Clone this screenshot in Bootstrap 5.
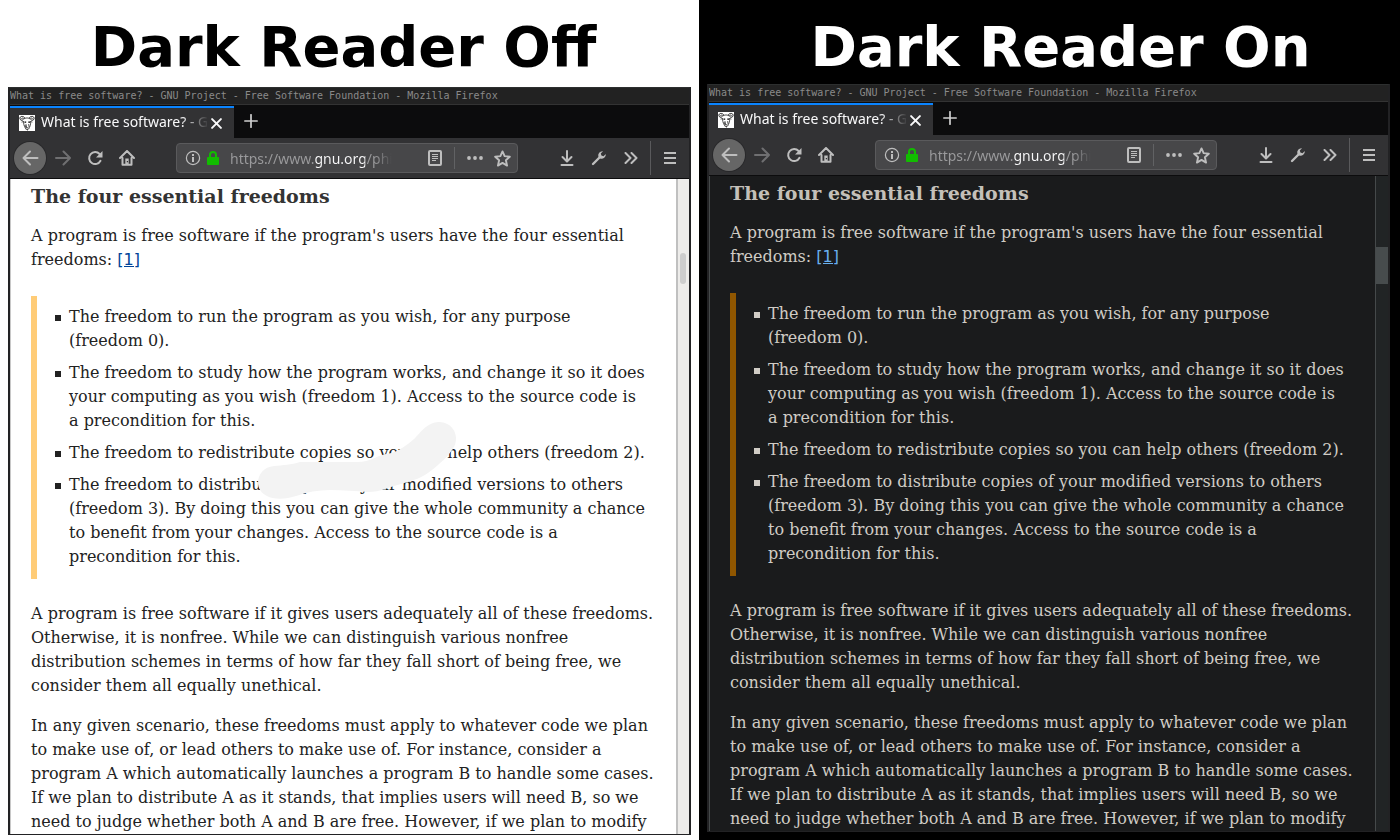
<!DOCTYPE html>
<html lang="en">
<head>
<meta charset="utf-8">
<meta name="viewport" content="width=device-width, initial-scale=1">
<title>Dark Reader comparison</title>
<link rel="stylesheet" href="https://cdn.jsdelivr.net/npm/bootstrap@5.3.0/dist/css/bootstrap.min.css">
<style>
.compare { display: grid; grid-template-columns: 699fr 701fr; }
.side { font-family: "DejaVu Sans", sans-serif; padding: 0 8px 5px; background: #fff; color: #000; }
.side-on { padding: 0 10px 8px 8px; background: #000; color: #fff; }
.caption { font-size: 56px; line-height: 64px; font-weight: 700; margin: 0; padding: 15px 12px 8px 0; white-space: nowrap; }
.side-on .caption { padding: 15px 0 5px 24px; }

.browser { border: 2px solid #222224; border-top: 1px solid #2d2f2f; border-bottom-width: 1px; background: #0c0c0d; min-width: 0; }
.win-title { font: 10px/16px "DejaVu Sans Mono", monospace; color: #8a8a8a; background: #222; border-bottom: 1px solid #333; height: 17px; white-space: nowrap; overflow: hidden; }
.tabs { height: 33px; padding-top: 1px; color: #d0d0d0; }
.tabs button, .tools button { background: none; border: 0; padding: 0; color: inherit; display: flex; align-items: center; justify-content: center; }
.tab { width: 224px; background: #323234; border-top: 2px solid #0a84ff; padding: 0 12px 0 9px; color: #f9f9fa; }
.tabs .tab-name { font: 14px/20px "Noto Sans", sans-serif; width: 166px; margin-left: 6px; padding-bottom: 2px; white-space: nowrap; overflow: hidden; justify-content: start; -webkit-mask-image: linear-gradient(90deg, #000 140px, transparent 168px); mask-image: linear-gradient(90deg, #000 140px, transparent 168px); }
.tabs .new-tab { width: 34px; padding-bottom: 2px; }
.tools { height: 41px; background: #323234; border-bottom: 1px solid #0c0c0d; color: #bebebe; padding: 0 4px; }
.tools .back { width: 32px; height: 32px; margin-right: 1px; border-radius: 50%; background: #666; box-shadow: 0 0 0 1px #29292b; }
.tools .tool { width: 32px; height: 32px; }
.tools .dim { color: #6f6f71; }
.address { width: 342px; height: 30px; margin-left: 33px; background: #474749; border: 1px solid #5a5a5c; border-radius: 4px; padding: 0 6px 0 8px; }
.address input { width: 168px; height: 26px; min-width: 0; border: 0; padding: 0; margin-left: 9px; outline: 0; font: 14px/24px "Noto Sans", sans-serif; color: transparent; background: linear-gradient(90deg, #9b9b9d 85px, #f9f9fa 85px 135px, #9b9b9d 135px 145px, transparent 162px); -webkit-background-clip: text; background-clip: text; }
.address .vr, .tools .vr { opacity: 1; background: #616264; }
.address .vr { height: 22px; align-self: center; margin: 0 12px; }
.address .bookmark { margin-left: 11px; }
.tools .menu-line { height: 34px; align-self: center; margin: 0 9px 0 3px; background: #5a5a5c; }
.tools .menu { padding: 4px 9px 4px 4px; }
.spacer { flex: 1 1 0; }

.web { background: #fff; color: #222; border-left: 1px solid #c8c8c8; font: 16px/24px "DejaVu Serif", serif; }
.article { padding: 4px 20px 0; flex: 1 1 0; min-width: 0; }
.article h2 { font: bold 19px/26px "DejaVu Serif", serif; color: #333; margin: 0 0 15px; }
.article p { margin: 0 0 16px; }
.article a { color: #049; font-family: "DejaVu Sans", sans-serif; }
.freedoms { list-style: none; border-left: 6px solid #fc7; margin: 24px 0 23px; padding: 9px 4px 10px 18px; }
.freedoms li { padding-left: 14px; margin-bottom: 8px; background: linear-gradient(currentColor, currentColor) 0 10px / 6px 6px no-repeat; }
.freedoms li:last-child { margin-bottom: 0; }
.smudge { position: absolute; left: 227px; top: 124px; }
.scroll { width: 13px; background: #edecea; border-left: 2px solid #c0c0c0; padding: 74px 3px 0 2px; }
.thumb { height: 31px; border-radius: 3px; background: #cdcdcd; }

.side-on .web { background: #1a1b1c; color: #d0ccc5; border-left-color: #45494a; }
.side-on h2 { color: #c4c0b9; }
.side-on .article a { color: #69b0ef; }
.side-on .freedoms { border-left-color: #8f5600; }
.side-on .scroll { background: #212425; border-left: 1px solid #45494a; padding: 71px 0 0; }
.side-on .thumb { height: 37px; border-radius: 0; background: #474c4d; }
</style>
</head>
<body>
<svg class="d-none" aria-hidden="true">
  <symbol id="gnu" viewBox="0 0 16 16"><path fill="#fff" d="M0 0h16v16H0z"/><g fill="none" stroke="#222" stroke-linecap="round"><path d="M5.500 2.500C4 .8 1 1 .9 3.300 1 5.200 2.700 5.800 3.800 5M10.500 2.500c1.500-1.700 4.500-1.500 4.600.8-.1 1.900-1.800 2.500-2.900 1.700"/><path stroke-width=".8" d="M2.500 3.500C3 2.500 4 3 4.600 3.800M13.500 3.500c-.5-1-1.500-.5-2.100.3M4.500 4c2-1.500 5-1.500 7 0M3 7l1.500-.5M13 7l-1.500-.5M4.500 7c.3 4 1.200 5 2.800 7.500M11.700 7c0 3-.7 4.500-2 7M7 9.500l.5 2.500M9.700 9.500l.3 2M6.200 10.500l.8 2"/></g><path d="M5.500 6.500h1.700v1.200H5.500zM9.300 6.500H11v1.200H9.300zM7.300 12.400h2.200v.9H7.300zM7.500 14.300h1.700l-.8 1.400z"/></symbol>
  <symbol id="close" viewBox="0 0 10 10"><path d="M1 1l8 8M9 1L1 9" fill="none" stroke="currentColor" stroke-width="1.800" stroke-linecap="round"/></symbol>
  <symbol id="plus" viewBox="0 0 14 14"><path d="M7 .8v12.400M.8 7h12.400" fill="none" stroke="currentColor" stroke-width="1.700" stroke-linecap="round"/></symbol>
  <symbol id="arrow" viewBox="0 0 16 16"><path d="M15 8H1M7.500 1.500L1 8l6.500 6.500" fill="none" stroke="currentColor" stroke-width="2" stroke-linecap="round" stroke-linejoin="round"/></symbol>
  <symbol id="forward" viewBox="0 0 16 16"><path d="M1 8h14M8.500 1.500L15 8l-6.500 6.500" fill="none" stroke="currentColor" stroke-width="2" stroke-linecap="round" stroke-linejoin="round"/></symbol>
  <symbol id="reload" viewBox="0 0 16 16"><path d="M13.500 10.800A6 6 0 1 1 12.600 4" fill="none" stroke="currentColor" stroke-width="2" stroke-linecap="round"/><path fill="currentColor" d="M15.500 1v6.500H9z"/></symbol>
  <symbol id="home" viewBox="0 0 16 16"><g fill="none" stroke="currentColor" stroke-width="2" stroke-linecap="round" stroke-linejoin="round"><path d="M1 8l7-7 7 7M3.500 8v6.800h9V8"/></g><path fill="currentColor" d="M6.300 8.500h3.400V15H6.300z"/><path fill="#323234" d="M7.800 11H9v1.300H7.800z"/></symbol>
  <symbol id="info" viewBox="0 0 16 16"><circle cx="8" cy="8" r="6.600" fill="none" stroke="currentColor" stroke-width="1.200"/><path fill="currentColor" d="M7 7h2v5H7zM7 4h2v2H7z"/></symbol>
  <symbol id="lock" viewBox="0 0 12 14"><path d="M3 7V4a3 3 0 0 1 6 0v3" fill="none" stroke="#12bc00" stroke-width="2"/><rect y="6" width="12" height="8" rx="1" fill="#12bc00"/></symbol>
  <symbol id="reader" viewBox="0 0 14 16"><rect x="1" y="1" width="12" height="14" rx="1" fill="none" stroke="currentColor" stroke-width="2"/><path d="M4 4.500h6M4 6.500h6M4 8.500h6M4 10.500h4" stroke="currentColor"/></symbol>
  <symbol id="dots" viewBox="0 0 16 16"><g fill="currentColor"><circle cx="2" cy="8" r="1.900"/><circle cx="8" cy="8" r="1.900"/><circle cx="14" cy="8" r="1.900"/></g></symbol>
  <symbol id="star" viewBox="0 0 16 16"><path d="M8 1.300l2 4.500 4.900.5-3.700 3.300 1.100 5.100L8 12.100l-4.300 2.600 1.100-5.100L1.100 6.300 6 5.800z" fill="none" stroke="currentColor" stroke-width="1.800" stroke-linejoin="round"/></symbol>
  <symbol id="download" viewBox="0 0 14 16"><path d="M7 1v10M2.500 7L7 11.500 11.500 7M1.500 15h11" fill="none" stroke="currentColor" stroke-width="2" stroke-linecap="round" stroke-linejoin="round"/></symbol>
  <symbol id="wrench" viewBox="0 0 16 16"><path d="M2 14l6.500-6.500" stroke="currentColor" stroke-width="2.400" stroke-linecap="round"/><path d="M12 1.200a4.300 4.300 0 0 0-4.600 5.600L9.200 8.600a4.300 4.300 0 0 0 5.600-4.600l-2.300 2.200-2.100-.6-.6-2.100z" fill="currentColor"/></symbol>
  <symbol id="more" viewBox="0 0 14 12"><path d="M1.500 1l5 5-5 5M7.500 1l5 5-5 5" fill="none" stroke="currentColor" stroke-width="2" stroke-linecap="round" stroke-linejoin="round"/></symbol>
  <symbol id="menu" viewBox="0 0 12 12"><path d="M0 1h12M0 6h12M0 11h12" stroke="currentColor" stroke-width="2"/></symbol>
</svg>

<main class="compare min-vh-100">
  <section class="side d-flex flex-column">
    <h1 class="caption text-center">Dark Reader Off</h1>
    <div class="browser d-flex flex-column flex-grow-1">
      <div class="win-title">What is free software? - GNU Project - Free Software Foundation - Mozilla Firefox</div>
      <div class="tabs d-flex">
        <div class="tab d-flex align-items-center">
          <svg width="16" height="16"><use href="#gnu"/></svg>
          <button class="tab-name" type="button">What is free software? - G</button>
          <button class="ms-auto" type="button" aria-label="Close tab"><svg width="11" height="11"><use href="#close"/></svg></button>
        </div>
        <button class="new-tab" type="button" aria-label="New tab"><svg width="14" height="14"><use href="#plus"/></svg></button>
      </div>
      <div class="tools d-flex align-items-center">
        <button class="back" type="button" aria-label="Back"><svg width="17" height="16"><use href="#arrow"/></svg></button>
        <button class="tool dim" type="button" aria-label="Forward"><svg width="16" height="16"><use href="#forward"/></svg></button>
        <button class="tool" type="button" aria-label="Reload"><svg width="16" height="16"><use href="#reload"/></svg></button>
        <button class="tool" type="button" aria-label="Home"><svg width="16" height="16"><use href="#home"/></svg></button>
        <div class="address d-flex align-items-center">
          <button type="button" aria-label="Site information"><svg width="16" height="16"><use href="#info"/></svg></button>
          <svg class="ms-1" width="16" height="14"><use href="#lock"/></svg>
          <input type="text" aria-label="Address" value="https://www.gnu.org/philo">
          <div class="spacer"></div>
          <button type="button" aria-label="Reader view"><svg width="14" height="16"><use href="#reader"/></svg></button>
          <div class="vr"></div>
          <button type="button" aria-label="Page actions"><svg width="16" height="16"><use href="#dots"/></svg></button>
          <button class="bookmark" type="button" aria-label="Bookmark"><svg width="17" height="17"><use href="#star"/></svg></button>
        </div>
        <div class="spacer"></div>
        <button class="tool" type="button" aria-label="Downloads"><svg width="14" height="16"><use href="#download"/></svg></button>
        <button class="tool" type="button" aria-label="Developer tools"><svg width="16" height="16"><use href="#wrench"/></svg></button>
        <button class="tool" type="button" aria-label="More tools"><svg width="14" height="12"><use href="#more"/></svg></button>
        <div class="vr menu-line"></div>
        <button class="menu" type="button" aria-label="Menu"><svg width="12" height="12"><use href="#menu"/></svg></button>
      </div>
      <div class="web d-flex flex-grow-1">
        <article class="article">
          <h2>The four essential freedoms</h2>
          <p>A program is free software if the program's users have the four essential freedoms: <a href="#f1">[1]</a></p>
          <div class="position-relative">
            <ul class="freedoms">
              <li>The freedom to run the program as you wish, for any purpose (freedom&nbsp;0).</li>
              <li>The freedom to study how the program works, and change it so it does your computing as you wish (freedom 1). Access to the source code is a&nbsp;precondition for this.</li>
              <li>The freedom to redistribute copies so you can help others (freedom&nbsp;2).</li>
              <li>The freedom to distribute copies of your modified versions to others (freedom 3). By doing this you can give the whole community a chance to benefit from your changes. Access to the source code is a precondition for this.</li>
            </ul>
            <svg class="smudge" width="206" height="84" viewBox="258 420 206 84" aria-hidden="true"><path fill="#f3f3f3" d="M258 483c0-9 6-16 16-17 9-1 17-1 26-4h58c12 0 18-6 28-8 9-1 15-5 22-10 10-7 13-15 21-19 6-4 14-4 20 0 7 5 9 14 5 22-5 9-15 17-22 23-10 8-20 11-31 14-12 3-20 8-33 8-12-1-25-2-38-2-12 0-23 2-34 6-9 3-22 4-29 0-6-3-9-8-9-13z"/></svg>
          </div>
          <p>A program is free software if it gives users adequately all of these freedoms. Otherwise, it is nonfree. While we can distinguish various nonfree distribution schemes in terms of how far they fall short of being free, we consider them all equally unethical.</p>
          <p class="mb-0">In any given scenario, these freedoms must apply to whatever code we plan to make use of, or lead others to make use of. For instance, consider a program A which automatically launches a program B to handle some cases. If we plan to distribute A as it stands, that implies users will need B, so we need to judge whether both A and B are free. However, if we plan to modify</p>
        </article>
        <div class="scroll"><div class="thumb"></div></div>
      </div>
    </div>
  </section>

  <section class="side side-on d-flex flex-column">
    <h1 class="caption text-center">Dark Reader On</h1>
    <div class="browser d-flex flex-column flex-grow-1">
      <div class="win-title">What is free software? - GNU Project - Free Software Foundation - Mozilla Firefox</div>
      <div class="tabs d-flex">
        <div class="tab d-flex align-items-center">
          <svg width="16" height="16"><use href="#gnu"/></svg>
          <button class="tab-name" type="button">What is free software? - G</button>
          <button class="ms-auto" type="button" aria-label="Close tab"><svg width="11" height="11"><use href="#close"/></svg></button>
        </div>
        <button class="new-tab" type="button" aria-label="New tab"><svg width="14" height="14"><use href="#plus"/></svg></button>
      </div>
      <div class="tools d-flex align-items-center">
        <button class="back" type="button" aria-label="Back"><svg width="17" height="16"><use href="#arrow"/></svg></button>
        <button class="tool dim" type="button" aria-label="Forward"><svg width="16" height="16"><use href="#forward"/></svg></button>
        <button class="tool" type="button" aria-label="Reload"><svg width="16" height="16"><use href="#reload"/></svg></button>
        <button class="tool" type="button" aria-label="Home"><svg width="16" height="16"><use href="#home"/></svg></button>
        <div class="address d-flex align-items-center">
          <button type="button" aria-label="Site information"><svg width="16" height="16"><use href="#info"/></svg></button>
          <svg class="ms-1" width="16" height="14"><use href="#lock"/></svg>
          <input type="text" aria-label="Address" value="https://www.gnu.org/philo">
          <div class="spacer"></div>
          <button type="button" aria-label="Reader view"><svg width="14" height="16"><use href="#reader"/></svg></button>
          <div class="vr"></div>
          <button type="button" aria-label="Page actions"><svg width="16" height="16"><use href="#dots"/></svg></button>
          <button class="bookmark" type="button" aria-label="Bookmark"><svg width="17" height="17"><use href="#star"/></svg></button>
        </div>
        <div class="spacer"></div>
        <button class="tool" type="button" aria-label="Downloads"><svg width="14" height="16"><use href="#download"/></svg></button>
        <button class="tool" type="button" aria-label="Developer tools"><svg width="16" height="16"><use href="#wrench"/></svg></button>
        <button class="tool" type="button" aria-label="More tools"><svg width="14" height="12"><use href="#more"/></svg></button>
        <div class="vr menu-line"></div>
        <button class="menu" type="button" aria-label="Menu"><svg width="12" height="12"><use href="#menu"/></svg></button>
      </div>
      <div class="web d-flex flex-grow-1">
        <article class="article">
          <h2>The four essential freedoms</h2>
          <p>A program is free software if the program's users have the four essential freedoms: <a href="#f1">[1]</a></p>
          <ul class="freedoms">
            <li>The freedom to run the program as you wish, for any purpose (freedom&nbsp;0).</li>
            <li>The freedom to study how the program works, and change it so it does your computing as you wish (freedom 1). Access to the source code is a&nbsp;precondition for this.</li>
            <li>The freedom to redistribute copies so you can help others (freedom&nbsp;2).</li>
            <li>The freedom to distribute copies of your modified versions to others (freedom 3). By doing this you can give the whole community a chance to benefit from your changes. Access to the source code is a precondition for this.</li>
          </ul>
          <p>A program is free software if it gives users adequately all of these freedoms. Otherwise, it is nonfree. While we can distinguish various nonfree distribution schemes in terms of how far they fall short of being free, we consider them all equally unethical.</p>
          <p class="mb-0">In any given scenario, these freedoms must apply to whatever code we plan to make use of, or lead others to make use of. For instance, consider a program A which automatically launches a program B to handle some cases. If we plan to distribute A as it stands, that implies users will need B, so we need to judge whether both A and B are free. However, if we plan to modify</p>
        </article>
        <div class="scroll"><div class="thumb"></div></div>
      </div>
    </div>
  </section>
</main>
<script src="https://cdn.jsdelivr.net/npm/bootstrap@5.3.0/dist/js/bootstrap.bundle.min.js"></script>
</body>
</html>
